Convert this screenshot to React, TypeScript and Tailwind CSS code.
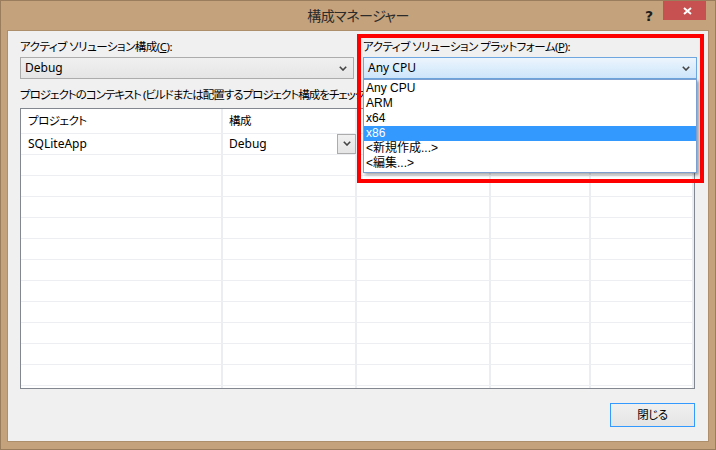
import React from 'react';

const FONT = 'font-[Noto_Sans,Noto_Sans_CJK_JP,sans-serif] [font-feature-settings:"palt"]';
// Japanese labels: the original uses Meiryo UI, which is narrower than Noto CJK
const JP = 'text-[11.5px] tracking-[-0.5px]';

const PLATFORMS = ['Any CPU', 'ARM', 'x64', 'x86', '<新規作成...>', '<編集...>'];

// widths of the five grid columns (right border of each is included)
const COLS = ['w-[202px]', 'w-[134px]', 'w-[134px]', 'w-[100px]', 'w-[103px]'];

function Chevron() {
  return (
    <svg width="8" height="5" viewBox="0 0 8 5" aria-hidden="true">
      <polyline points="0.8,0.8 4,4 7.2,0.8" fill="none" stroke="#444" strokeWidth="1.6" />
    </svg>
  );
}

function Combo({ value, open }: { value: string; open?: boolean }) {
  return (
    <div
      className={`h-[22px] w-[334px] flex items-center justify-between pl-[4px] pr-[6px] border text-[12px] text-black ${
        open
          ? 'border-[#6ea6df] bg-gradient-to-b from-[#ecf5fd] to-[#cde5fa]'
          : 'border-[#acacac] bg-gradient-to-b from-[#f0f0f0] to-[#e5e5e5]'
      }`}
    >
      <span>{value}</span>
      <Chevron />
    </div>
  );
}

function GridRow({ cells, header }: { cells: React.ReactNode[]; header?: boolean }) {
  return (
    <div className={`flex border-b border-[#eceef1] ${header ? 'h-[25px]' : 'h-[21px]'}`}>
      {COLS.map((w, i) => (
        <div
          key={i}
          className={`${w} shrink-0 flex items-center border-r-2 border-[#eaedf2] ${i === 0 ? 'pl-[7px]' : 'pl-[6px]'}`}
        >
          {cells[i]}
        </div>
      ))}
    </div>
  );
}

export default function App() {
  const emptyRows = Array.from({ length: 12 });

  return (
    <div className={`${FONT} relative w-[716px] h-[450px] bg-[#c4a27c] border border-[#9a7d5c] flex flex-col overflow-hidden`}>
      {/* title bar */}
      <div className="h-[29px] shrink-0 grid grid-cols-[1fr_auto_1fr]">
        <div />
        <div className="flex items-center text-[14px] tracking-[-0.5px] text-[#2b2b2b] pb-[1px]">構成マネージャー</div>
        <div className="flex justify-end items-start pr-[9px]">
          <span className="mt-[5px] mr-[10px] text-[14px] font-bold text-[#1e1e1e] font-[DejaVu_Sans,sans-serif]">?</span>
          <button className="w-[43px] h-[19px] bg-[#c75050] flex items-center justify-center pl-[5px]">
            <svg width="9" height="8" viewBox="0 0 9 8" aria-hidden="true">
              <path d="M1 1 L8 7 M8 1 L1 7" stroke="#fff" strokeWidth="2" />
            </svg>
          </button>
        </div>
      </div>

      {/* client area */}
      <div className="mx-[6px] mb-[7px] flex-1 border border-[#ad8f6b] bg-[#f0f0f0] flex flex-col pl-[12px] pr-[13px] pt-[8px] pb-[14px] text-[12px] text-black">
        <div className="flex gap-[9px]">
          <div className="flex flex-col gap-[2px]">
            <div className={`h-[16px] leading-[16px] ${JP}`}>
              アクティブ ソリューション構成(<span className="underline">C</span>):
            </div>
            <Combo value="Debug" />
          </div>
          <div className="flex flex-col gap-[2px]">
            <div className={`h-[16px] leading-[16px] ${JP}`}>
              アクティブ ソリューション プラットフォーム(<span className="underline">P</span>):
            </div>
            <div className="relative z-10">
              <Combo value="Any CPU" open />
              <div className="absolute left-0 top-full w-full bg-white border border-[#7c9fcf] py-px shadow-[2px_2px_3px_rgba(0,0,0,0.35)] font-[Liberation_Sans,Noto_Sans_CJK_JP,sans-serif]">
                {PLATFORMS.map((p) => (
                  <div
                    key={p}
                    className={`h-[15px] leading-[15px] pl-[2px] text-[12px] ${p === 'x86' ? 'bg-[#3399ff] text-white' : 'text-black'}`}
                  >
                    {p}
                  </div>
                ))}
              </div>
            </div>
          </div>
        </div>

        {/* only the part left of the open list is visible */}
        <div className="mt-[8px] h-[16px] leading-[16px] whitespace-nowrap text-[11.5px] tracking-[-1px]">
          プロジェクトのコンテキスト (ビルドまたは配置するプロジェクト構成をチェック
        </div>

        <div className="mt-[5px] h-[281px] w-[675px] border border-[#828790] bg-white overflow-hidden">
          <GridRow
            header
            cells={[
              <span className={JP}>プロジェクト</span>,
              <span className={JP}>構成</span>,
            ]}
          />
          <GridRow
            cells={[
              'SQLiteApp',
              <div className="flex-1 flex items-center justify-between h-full">
                <span>Debug</span>
                <div className="w-[19px] h-[20px] mt-[-1px] mr-[-1px] border border-[#acacac] bg-gradient-to-b from-[#f0f0f0] to-[#e5e5e5] flex items-center justify-center">
                  <Chevron />
                </div>
              </div>,
            ]}
          />
          {emptyRows.map((_, i) => (
            <GridRow key={i} cells={[]} />
          ))}
        </div>

        <div className="mt-[14px] flex justify-end">
          <button className={`w-[85px] h-[24px] border border-[#3399ff] bg-gradient-to-b from-[#f0f0f0] to-[#e5e5e5] text-black ${JP}`}>
            閉じる
          </button>
        </div>
      </div>

      {/* highlight drawn over the screenshot */}
      <div className="pointer-events-none absolute left-[356px] top-[33px] w-[347px] h-[149px] border-4 border-[#ff0000]" />
    </div>
  );
}
